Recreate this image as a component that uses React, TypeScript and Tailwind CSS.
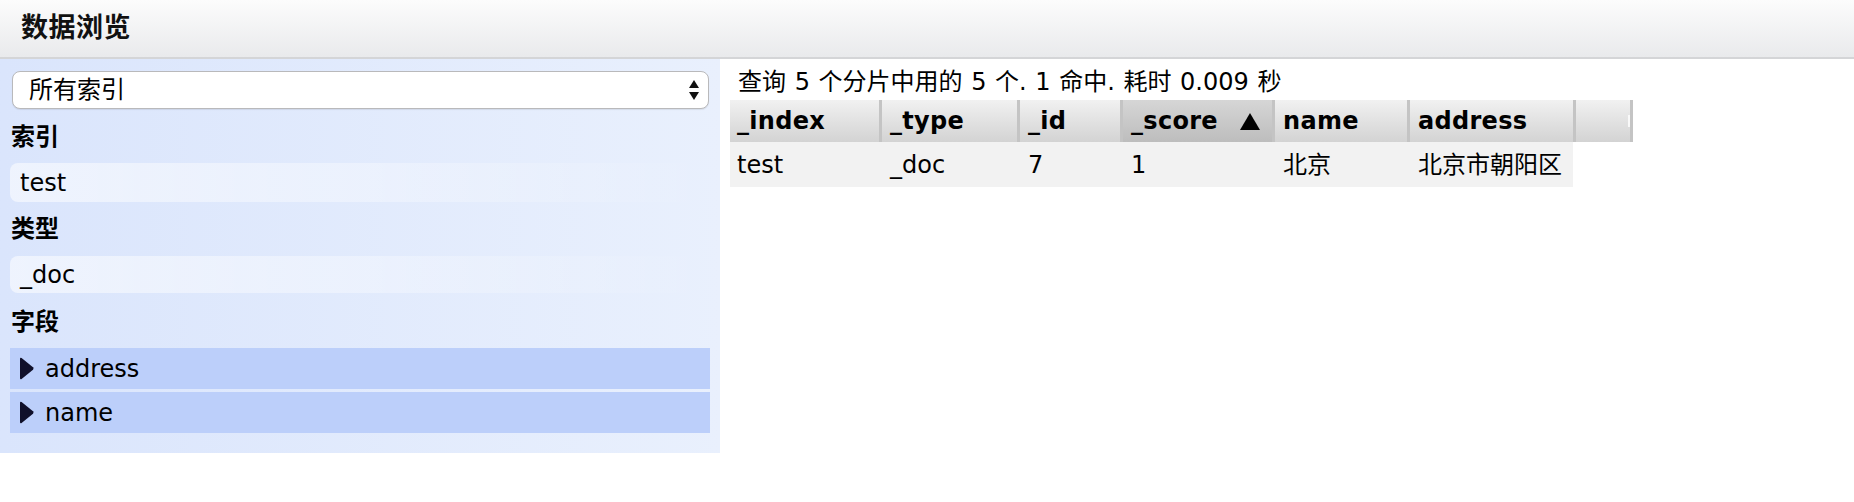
import React from "react";

const cols = [
  { key: "_index", w: "w-[149px]", first: true },
  { key: "_type", w: "w-[138px]" },
  { key: "_id", w: "w-[103px]" },
  { key: "_score", w: "w-[152px]", sorted: true },
  { key: "name", w: "w-[135px]" },
  { key: "address", w: "w-[166px]" },
];

const row = ["test", "_doc", "7", "1", "北京", "北京市朝阳区"];

function Tri() {
  return (
    <svg width="15" height="23" viewBox="0 0 15 23" className="shrink-0">
      <path d="M1 2 Q1 0 2.6 1 L14 10.3 Q15 11.5 14 12.7 L2.6 22 Q1 23 1 21 Z" fill="#10102a" />
    </svg>
  );
}

export default function App() {
  return (
    <div className="w-[1854px] h-[502px] bg-white text-black font-['DejaVu_Sans','Noto_Sans_CJK_SC',sans-serif] overflow-hidden">
      <div className="h-[59px] border-b-2 border-[#d4d5d7] bg-linear-to-b from-[#fcfcfc] to-[#e9eaec] flex items-center pl-[21px] pb-[3px]">
        <h1 className="text-[27px] font-bold leading-none text-[#111] tracking-[0.5px]">数据浏览</h1>
      </div>
      <div className="flex">
        <div className="w-[720px] h-[394px] shrink-0 bg-linear-to-r from-[#dae5fc] to-[#e9f0fd] px-[10px] pt-[12px]">
          <div className="ml-[2px] mr-[1px] h-[38px] bg-white border border-[#b9b9bb] rounded-[8px] shadow-[0_1px_1px_rgba(0,0,0,0.08)] flex items-center justify-between pl-[16px] pr-[9px] text-[24px]">
            <span className="leading-none">所有索引</span>
            <svg width="10" height="20" viewBox="0 0 10 20">
              <polygon points="5,0 10,8 0,8" fill="#111" />
              <polygon points="0,12 10,12 5,20" fill="#111" />
            </svg>
          </div>
          <div className="mt-[9px] h-[38px] flex items-center pl-[1px] text-[24px] font-bold">索引</div>
          <div className="mt-[7px] h-[39px] rounded-[8px] bg-linear-to-r from-white/55 via-white/35 to-white/0 flex items-center pl-[10px] text-[24px]">test</div>
          <div className="mt-[8px] h-[38px] flex items-center pl-[1px] text-[24px] font-bold">类型</div>
          <div className="mt-[8px] h-[37px] rounded-[8px] bg-linear-to-r from-white/55 via-white/35 to-white/0 flex items-center pl-[10px] text-[24px]">_doc</div>
          <div className="mt-[10px] h-[38px] flex items-center pl-[1px] text-[24px] font-bold">字段</div>
          <div className="mt-[7px] flex flex-col gap-[3px]">
            {["address", "name"].map((f) => (
              <div key={f} className="h-[41px] bg-[#bccffa] flex items-center pl-[9px] gap-[11px] text-[24px]">
                <Tri />
                <span className="leading-none">{f}</span>
              </div>
            ))}
          </div>
        </div>
        <div className="flex-1 pl-[10px]">
          <div className="h-[41px] pl-[8px] pt-[9px] text-[24px] leading-[28px] [word-spacing:1px]">查询 5 个分片中用的 5 个. 1 命中. 耗时 0.009 秒</div>
          <div className="flex h-[42px]">
            {cols.map((c) => (
              <div
                key={c.key}
                className={`${c.w} h-full flex items-center justify-between text-[24px] font-bold tracking-[0.3px] ${c.first ? "pl-[7px]" : "border-l-[3px] border-[#c4c4c4] pl-[8px]"} ${c.sorted ? "bg-linear-to-b from-[#d6d6d6] to-[#bdbdbd] pr-[12px]" : "bg-linear-to-b from-[#f1f1f1] to-[#d3d3d3]"}`}
              >
                <span className="leading-none">{c.key}</span>
                {c.sorted ? (
                  <svg width="20" height="17" viewBox="0 0 20 17">
                    <polygon points="10,0 20,17 0,17" fill="#000" />
                  </svg>
                ) : null}
              </div>
            ))}
            <div className="w-[60px] h-full border-x-[3px] border-[#c4c4c4] bg-linear-to-b from-[#f1f1f1] to-[#d3d3d3] flex items-start justify-end pt-[15px]">
              <div className="w-[2px] h-[12px] bg-white/80" />
            </div>
          </div>
          <div className="flex h-[45px] w-[843px] bg-[#f2f2f2]">
            {cols.map((c, i) => (
              <div
                key={c.key}
                className={`${c.w} h-full flex items-center text-[24px] ${c.first ? "pl-[7px]" : "pl-[11px]"}`}
              >
                <span className="leading-none">{row[i]}</span>
              </div>
            ))}
          </div>
        </div>
      </div>
    </div>
  );
}
